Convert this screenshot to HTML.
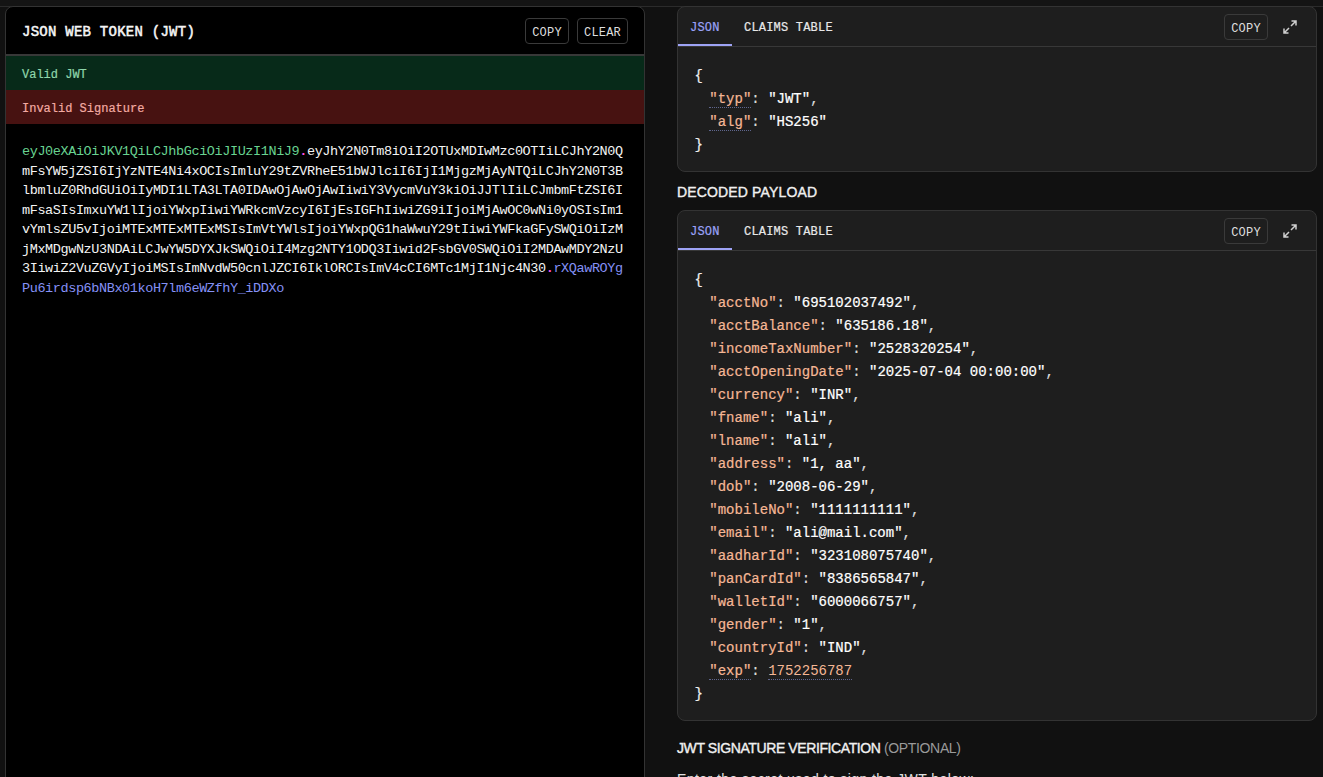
<!DOCTYPE html>
<html lang="en">
<head>
<meta charset="utf-8">
<title>JWT Debugger</title>
<style>
*{box-sizing:border-box;margin:0;padding:0}
html,body{width:1323px;height:777px;overflow:hidden;background:#111111;}
body{position:relative;font-family:"Liberation Sans",Arial,sans-serif;color:#f2f2f2;}
.mono{font-family:"Liberation Mono","DejaVu Sans Mono",monospace;}
.topstrip{position:absolute;left:0;top:0;width:1323px;height:7px;background:#141414;border-bottom:1px solid #2b2b2b;}
.card{position:absolute;border:1px solid #333333;border-radius:8px;overflow:hidden;}
#left{left:5px;top:6px;width:640px;height:800px;background:#000;}
#left .hdr{position:absolute;left:0;top:0;width:638px;height:49px;border-bottom:2px solid #383838;}
#left .title{position:absolute;left:16px;top:17px;font-size:14px;line-height:16px;font-weight:normal;-webkit-text-stroke:0.5px;letter-spacing:0.25px;color:#f5f5f5;white-space:pre;}
.btn{position:absolute;height:26px;border:1px solid #3a3a3a;border-radius:4px;font-size:12px;line-height:28px;text-align:center;color:#dedede;letter-spacing:0.2px;}
.strip{position:absolute;left:0;width:638px;height:34px;font-size:12px;line-height:38px;padding-left:16px;white-space:pre;-webkit-text-stroke:0.2px;}
.ok{top:49px;background:#072a19;color:#8fd6ab;}
.bad{top:83px;background:#471211;color:#f3aaa2;}
#token{position:absolute;left:16px;top:135px;font-size:13.5px;letter-spacing:-0.4px;line-height:19.57px;white-space:pre;color:#f4f4f4;}
#token .h{color:#68d391;}
#token .d{color:#ff4fe0;font-weight:bold;}
#token .s{color:#8591f6;}
.rc{left:677px;width:640px;background:#1e1e1e;}
.tabs{position:absolute;left:0;top:0;width:638px;height:40px;border-bottom:1px solid #383838;}
.tab{position:absolute;top:0;height:39px;font-size:12px;line-height:43px;letter-spacing:0.2px;white-space:pre;color:#e8e8e8;-webkit-text-stroke:0.2px;}
.tab.act{left:0;width:54px;padding-left:12px;color:#9aa2f7;border-bottom:2px solid #9ea3f5;}
.tab.t2{left:66px;}
.json{position:absolute;left:14.5px;top:58px;font-size:14px;line-height:23px;white-space:pre;color:#dcdcdc;-webkit-text-stroke:0.2px;}
.json .k{color:#f5b795;}
.json .u{border-bottom:1px dotted #5f668e;}
.json .b{position:relative;left:2px;color:#f0f0f0;}
.json .v{color:#ffffff;}
.json .n{color:#f5b795;-webkit-text-stroke:0;}
.h2{position:absolute;left:677px;font-size:14px;font-weight:normal;-webkit-text-stroke:0.38px;line-height:16px;color:#f0f0f0;white-space:pre;}
.h2 span{-webkit-text-stroke:0;font-weight:normal;color:#9a9a9a;letter-spacing:-0.35px;}
.exp{position:absolute;left:605px;top:13px;width:14px;height:14px;}
</style>
</head>
<body>
<div class="topstrip"></div>

<div class="card" id="left">
  <div class="hdr">
    <div class="title mono">JSON WEB TOKEN (JWT)</div>
    <div class="btn mono" style="left:519px;top:11px;width:44px;">COPY</div>
    <div class="btn mono" style="left:571px;top:11px;width:51px;">CLEAR</div>
  </div>
  <div class="strip ok mono">Valid JWT</div>
  <div class="strip bad mono">Invalid Signature</div>
  <div id="token" class="mono"><span class="h">eyJ0eXAiOiJKV1QiLCJhbGciOiJIUzI1NiJ9</span><span class="d">.</span>eyJhY2N0Tm8iOiI2OTUxMDIwMzc0OTIiLCJhY2N0Q
mFsYW5jZSI6IjYzNTE4Ni4xOCIsImluY29tZVRheE51bWJlciI6IjI1MjgzMjAyNTQiLCJhY2N0T3B
lbmluZ0RhdGUiOiIyMDI1LTA3LTA0IDAwOjAwOjAwIiwiY3VycmVuY3kiOiJJTlIiLCJmbmFtZSI6I
mFsaSIsImxuYW1lIjoiYWxpIiwiYWRkcmVzcyI6IjEsIGFhIiwiZG9iIjoiMjAwOC0wNi0yOSIsIm1
vYmlsZU5vIjoiMTExMTExMTExMSIsImVtYWlsIjoiYWxpQG1haWwuY29tIiwiYWFkaGFySWQiOiIzM
jMxMDgwNzU3NDAiLCJwYW5DYXJkSWQiOiI4Mzg2NTY1ODQ3Iiwid2FsbGV0SWQiOiI2MDAwMDY2NzU
3IiwiZ2VuZGVyIjoiMSIsImNvdW50cnlJZCI6IklORCIsImV4cCI6MTc1MjI1Njc4N30<span class="d">.</span><span class="s">rXQawROYg
Pu6irdsp6bNBx01koH7lm6eWZfhY_iDDXo</span></div>
</div>

<div class="card rc" style="top:6px;height:166px;">
  <div class="tabs">
    <div class="tab act mono">JSON</div>
    <div class="tab t2 mono">CLAIMS TABLE</div>
    <div class="btn mono" style="left:546px;top:7px;width:44px;">COPY</div>
    <svg class="exp" viewBox="0 0 14 14" fill="none" stroke="#cfcfcf" stroke-width="1.5"><path d="M8.5 1H13V5.5M13 1L8 6M5.5 13H1V8.5M1 13L6 8"/></svg>
  </div>
  <div class="json mono"><span class="b">{</span>
  <span class="k u"><span class="q">"</span>typ<span class="q">"</span></span>: <span class="v"><span class="q">"</span>JWT<span class="q">"</span></span>,
  <span class="k u"><span class="q">"</span>alg<span class="q">"</span></span>: <span class="v"><span class="q">"</span>HS256<span class="q">"</span></span>
<span class="b">}</span></div>
</div>

<div class="h2" style="top:184px;letter-spacing:0.15px;">DECODED PAYLOAD</div>

<div class="card rc" style="top:210px;height:511px;">
  <div class="tabs">
    <div class="tab act mono">JSON</div>
    <div class="tab t2 mono">CLAIMS TABLE</div>
    <div class="btn mono" style="left:546px;top:7px;width:44px;">COPY</div>
    <svg class="exp" viewBox="0 0 14 14" fill="none" stroke="#cfcfcf" stroke-width="1.5"><path d="M8.5 1H13V5.5M13 1L8 6M5.5 13H1V8.5M1 13L6 8"/></svg>
  </div>
  <div class="json mono"><span class="b">{</span>
  <span class="k"><span class="q">"</span>acctNo<span class="q">"</span></span>: <span class="v"><span class="q">"</span>695102037492<span class="q">"</span></span>,
  <span class="k"><span class="q">"</span>acctBalance<span class="q">"</span></span>: <span class="v"><span class="q">"</span>635186.18<span class="q">"</span></span>,
  <span class="k"><span class="q">"</span>incomeTaxNumber<span class="q">"</span></span>: <span class="v"><span class="q">"</span>2528320254<span class="q">"</span></span>,
  <span class="k"><span class="q">"</span>acctOpeningDate<span class="q">"</span></span>: <span class="v"><span class="q">"</span>2025-07-04 00:00:00<span class="q">"</span></span>,
  <span class="k"><span class="q">"</span>currency<span class="q">"</span></span>: <span class="v"><span class="q">"</span>INR<span class="q">"</span></span>,
  <span class="k"><span class="q">"</span>fname<span class="q">"</span></span>: <span class="v"><span class="q">"</span>ali<span class="q">"</span></span>,
  <span class="k"><span class="q">"</span>lname<span class="q">"</span></span>: <span class="v"><span class="q">"</span>ali<span class="q">"</span></span>,
  <span class="k"><span class="q">"</span>address<span class="q">"</span></span>: <span class="v"><span class="q">"</span>1, aa<span class="q">"</span></span>,
  <span class="k"><span class="q">"</span>dob<span class="q">"</span></span>: <span class="v"><span class="q">"</span>2008-06-29<span class="q">"</span></span>,
  <span class="k"><span class="q">"</span>mobileNo<span class="q">"</span></span>: <span class="v"><span class="q">"</span>1111111111<span class="q">"</span></span>,
  <span class="k"><span class="q">"</span>email<span class="q">"</span></span>: <span class="v"><span class="q">"</span>ali@mail.com<span class="q">"</span></span>,
  <span class="k"><span class="q">"</span>aadharId<span class="q">"</span></span>: <span class="v"><span class="q">"</span>323108075740<span class="q">"</span></span>,
  <span class="k"><span class="q">"</span>panCardId<span class="q">"</span></span>: <span class="v"><span class="q">"</span>8386565847<span class="q">"</span></span>,
  <span class="k"><span class="q">"</span>walletId<span class="q">"</span></span>: <span class="v"><span class="q">"</span>6000066757<span class="q">"</span></span>,
  <span class="k"><span class="q">"</span>gender<span class="q">"</span></span>: <span class="v"><span class="q">"</span>1<span class="q">"</span></span>,
  <span class="k"><span class="q">"</span>countryId<span class="q">"</span></span>: <span class="v"><span class="q">"</span>IND<span class="q">"</span></span>,
  <span class="k u"><span class="q">"</span>exp<span class="q">"</span></span>: <span class="n u">1752256787</span>
<span class="b">}</span></div>
</div>

<div class="h2" style="top:740px;letter-spacing:-0.4px;">JWT SIGNATURE VERIFICATION <span>(OPTIONAL)</span></div>
<div class="h2" style="top:771px;-webkit-text-stroke:0;font-weight:normal;color:#e0e0e0;letter-spacing:0.43px;">Enter the secret used to sign the JWT below:</div>
</body>
</html>
